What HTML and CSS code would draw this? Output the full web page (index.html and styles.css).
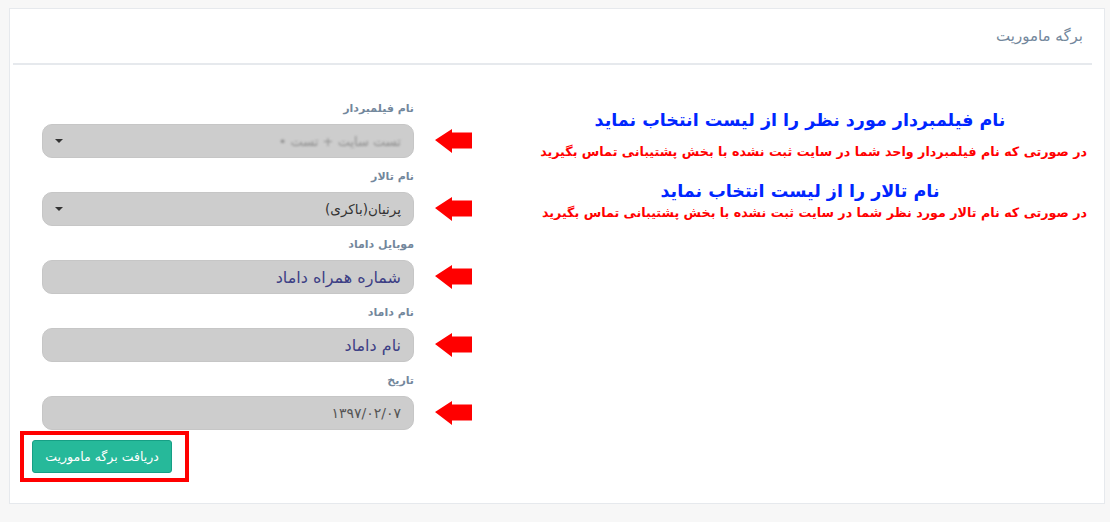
FILE: index.html
```html
<!DOCTYPE html>
<html lang="fa">
<head>
<meta charset="utf-8">
<title>برگه ماموریت</title>
<link rel="stylesheet" href="styles.css">
</head>
<body>
<div class="panel">
  <div class="panel-title"><h2>برگه ماموریت</h2></div>
  <div class="panel-body">
    <div class="form-col">
      <div class="row">
        <div class="group">
          <label>نام فیلمبردار</label>
          <div class="control"><span class="value blurred">تست سایت + تست •</span><span class="caret"></span></div>
        </div>
        <svg class="arrow" width="37" height="24" viewBox="0 0 37 24"><polygon points="0,11 17,0 17,3.5 37,3.5 37,19.5 17,19.5 17,24"/></svg>
      </div>
      <div class="row">
        <div class="group">
          <label>نام تالار</label>
          <div class="control"><span class="value dark">پرنیان(باکری)</span><span class="caret"></span></div>
        </div>
        <svg class="arrow" width="37" height="24" viewBox="0 0 37 24"><polygon points="0,11 17,0 17,3.5 37,3.5 37,19.5 17,19.5 17,24"/></svg>
      </div>
      <div class="row">
        <div class="group">
          <label>موبایل داماد</label>
          <div class="control"><span class="value placeholder">شماره همراه داماد</span></div>
        </div>
        <svg class="arrow" width="37" height="24" viewBox="0 0 37 24"><polygon points="0,11 17,0 17,3.5 37,3.5 37,19.5 17,19.5 17,24"/></svg>
      </div>
      <div class="row">
        <div class="group">
          <label>نام داماد</label>
          <div class="control"><span class="value placeholder">نام داماد</span></div>
        </div>
        <svg class="arrow" width="37" height="24" viewBox="0 0 37 24"><polygon points="0,11 17,0 17,3.5 37,3.5 37,19.5 17,19.5 17,24"/></svg>
      </div>
      <div class="row last">
        <div class="group">
          <label>تاریخ</label>
          <div class="control"><span class="value date">۱۳۹۷/۰۲/۰۷</span></div>
        </div>
        <svg class="arrow" width="37" height="24" viewBox="0 0 37 24"><polygon points="0,11 17,0 17,3.5 37,3.5 37,19.5 17,19.5 17,24"/></svg>
      </div>
      <div class="submit-box"><button class="btn">دریافت برگه ماموریت</button></div>
    </div>
    <div class="notes">
      <h3 class="note-title first">نام فیلمبردار مورد نظر را از لیست انتخاب نماید</h3>
      <p class="note-text">در صورتی که نام فیلمبردار واحد شما در سایت ثبت نشده با بخش پشتیبانی تماس بگیرید</p>
      <h3 class="note-title second">نام تالار را از لیست انتخاب نماید</h3>
      <p class="note-text">در صورتی که نام تالار مورد نظر شما در سایت ثبت نشده با بخش پشتیبانی تماس بگیرید</p>
    </div>
  </div>
</div>
</body>
</html>
```
FILE: styles.css
```css
* { box-sizing: border-box; }
html, body { margin: 0; padding: 0; }
body {
  background: #f7f7f7;
  font-family: "DejaVu Sans", sans-serif;
  width: 1110px;
  height: 522px;
  overflow: hidden;
}
.panel {
  margin: 8px 0 0 9px;
  width: 1096px;
  height: 496px;
  background: #fff;
  border: 1px solid #e6e9ed;
}
.panel-title {
  margin: 0 12px 0 3px;
  height: 56px;
  border-bottom: 2px solid #e6e9ed;
  direction: rtl;
  padding: 16px 9px 0 0;
}
.panel-title h2 {
  margin: 0;
  font-size: 15px;
  line-height: 22px;
  font-weight: normal;
  color: #73879c;
}
.panel-body {
  display: flex;
  direction: ltr;
}
.form-col {
  margin-left: 10px;
  width: 452px;
  padding-top: 35px;
}
.row {
  display: flex;
  align-items: flex-end;
  margin-bottom: 10px;
}
.row.last { margin-bottom: 1px; }
.group {
  margin-left: 22px;
  width: 372px;
  direction: rtl;
}
.group label {
  display: block;
  font-size: 11px;
  font-weight: bold;
  line-height: 17px;
  margin-bottom: 7px;
  color: #73879c;
}
.control {
  height: 34px;
  background: #cdcdcd;
  border: 1px solid #c6c6c6;
  border-radius: 10px;
  display: flex;
  align-items: center;
  padding: 0 12px;
}
.value { font-size: 15px; white-space: nowrap; }
.value.blurred { color: #8f8f8f; font-size: 13px; filter: blur(1.3px); }
.value.dark { color: #333; font-size: 13.5px; }
.value.placeholder { color: #3d3f85; font-size: 16px; }
.value.date { color: #555; font-size: 14px; }
.caret {
  margin-right: auto;
  width: 0;
  height: 0;
  border-left: 4px solid transparent;
  border-right: 4px solid transparent;
  border-top: 4px solid #333;
}
.arrow {
  margin-left: 21px;
  margin-bottom: 5px;
  fill: #ff0000;
  flex: none;
}
.submit-box {
  display: inline-block;
  border: 4px solid #ff0000;
  padding: 5px 13px 5px 8px;
}
.btn {
  display: block;
  width: 140px;
  height: 33px;
  background: #26b99a;
  border: 1px solid #169f85;
  border-radius: 3px;
  color: #fff;
  font-family: "DejaVu Sans", sans-serif;
  font-size: 12.5px;
  direction: rtl;
  padding: 0;
}
.notes {
  margin-left: 41px;
  width: 574px;
  direction: rtl;
  padding-top: 43px;
}
.note-title {
  margin: 0;
  text-align: center;
  color: #0026ff;
  font-size: 17.5px;
  line-height: 24px;
  font-weight: bold;
}
.note-title.second { margin-top: 17px; }
.note-text {
  margin: 10px 0 0;
  text-align: right;
  color: #ff0000;
  font-size: 12.7px;
  font-weight: bold;
  line-height: 20px;
  white-space: nowrap;
}
.note-title.second + .note-text { margin-top: 0; }
```
